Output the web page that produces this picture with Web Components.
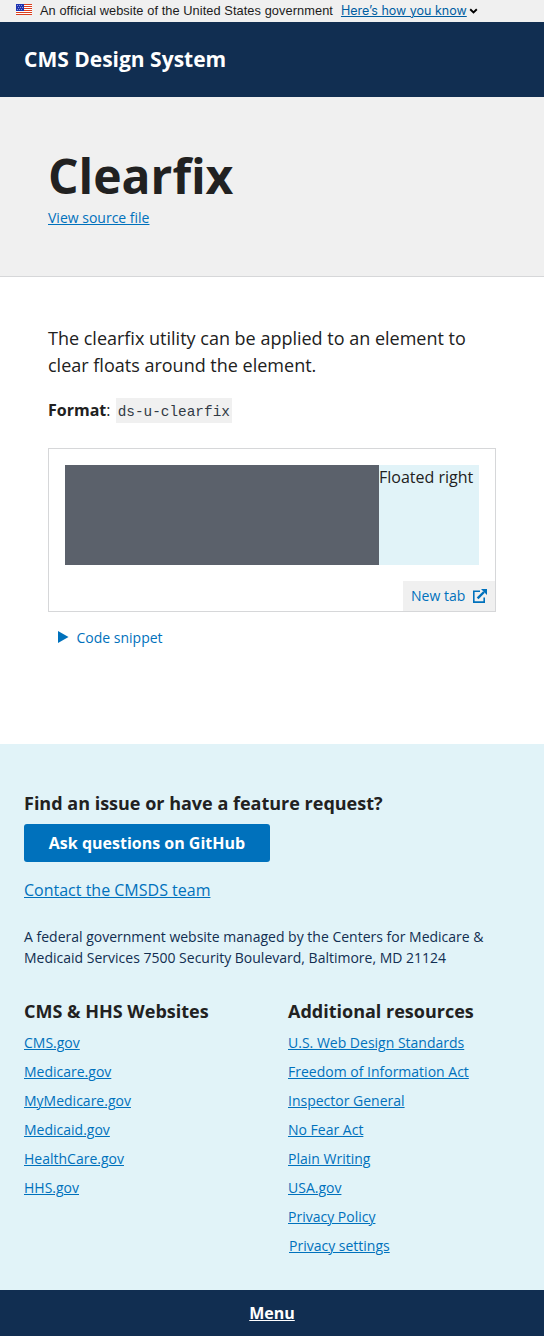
<!DOCTYPE html>
<html lang="en">
<head>
<meta charset="utf-8">
<title>Clearfix - CMS Design System</title>
<style>
html,body{margin:0;padding:0}
body{font:16px/24px "Open Sans",sans-serif;color:#212121;background:#fff}
</style>
</head>
<body>
<ds-page></ds-page>
<script>
const define = (name, html) => {
  const t = document.createElement('template');
  t.innerHTML = html;
  customElements.define(name, class extends HTMLElement {
    constructor() {
      super();
      this.attachShadow({mode: 'open'}).append(t.content.cloneNode(true));
    }
  });
};

define('ds-link', `<style>
:host{display:inline-block;font-size:14px;line-height:21px}
a{color:#0071bc;text-decoration:underline;text-decoration-thickness:1px;text-underline-offset:1px}
</style><a href="#"><slot></slot></a>`);

define('ds-flag', `<style>:host{display:block;width:16px;height:11px}svg{display:block}</style>
<svg width="16" height="11" viewBox="0 0 16 11" shape-rendering="crispEdges">
<path fill="#fff" d="M0 0h16v11H0z"/>
<path fill="#db3e1f" d="M8 0h8v1H8zM8 2h8v1H8zM8 4h8v1H8zM8 6h8v1H8zM0 8h16v1H0zM0 10h16v1H0z"/>
<path fill="#1e33b1" d="M0 0h8v7H0z"/>
<g fill="#fff" shape-rendering="auto"><circle cx="1.5" cy="1.5" r=".45"/><circle cx="3.5" cy="1.5" r=".45"/><circle cx="5.5" cy="1.5" r=".45"/><circle cx="2.5" cy="3.5" r=".45"/><circle cx="4.5" cy="3.5" r=".45"/><circle cx="6.5" cy="3.5" r=".45"/><circle cx="1.5" cy="5.5" r=".45"/><circle cx="3.5" cy="5.5" r=".45"/><circle cx="5.5" cy="5.5" r=".45"/></g>
</svg>`);

define('ds-usa-banner', `<style>
:host{display:flex;height:22px;box-sizing:border-box;padding:0 16px;background:#f0f0f0;font:12.8px/22px "Liberation Sans",sans-serif;color:#1b1b1b}
ds-flag{margin:4px 8px 0 0}
span{white-space:nowrap;letter-spacing:.072px}
a{margin-left:8px;color:#005ea2;font-family:Inter,sans-serif;font-size:12.5px;text-decoration:underline;text-decoration-thickness:1px;text-underline-offset:1px;white-space:nowrap}
svg{margin:8px 0 0 2px;display:block}
</style><ds-flag></ds-flag><span>An official website of the United States government</span><a href="#">Here’s how you know</a>
<svg width="9" height="6" viewBox="0 0 9 6"><path d="M1.2 1.3 4.5 4.4 7.8 1.3" fill="none" stroke="#000" stroke-width="1.9"/></svg>`);

define('ds-header', `<style>
:host{display:flex;align-items:center;height:75px;box-sizing:border-box;padding:0 24px 2px;background:#112e51;color:#fff;font-size:21px;font-weight:700;line-height:28px;white-space:nowrap}
</style><span><slot></slot></span>`);

define('ds-hero', `<style>
:host{display:block;height:180px;box-sizing:border-box;padding:48px 48px 0;background:#f0f0f0;border-bottom:1px solid #d6d7d9}
h1{margin:0;font-size:48px;line-height:62px;font-weight:700}
ds-link{display:block}
</style><h1><slot></slot></h1><ds-link>View source file</ds-link>`);

define('ds-example', `<style>
:host{display:block;height:164px;box-sizing:border-box;border:1px solid #d6d7d9}
.demo{display:flex;margin:16px 16px 16px;height:100px}
.dark{flex:1;background:#5b616b}
.right{width:100px;background:#e1f3f8;box-sizing:border-box;white-space:nowrap}
.foot{display:flex;justify-content:flex-end}
a{display:flex;align-items:center;height:30px;width:92px;box-sizing:border-box;padding:0 8px;justify-content:space-between;background:#f0f0f0;color:#0071bc;font-size:14px;text-decoration:none;white-space:nowrap}
</style><div class="demo"><div class="dark"></div><div class="right"><slot></slot></div></div>
<div class="foot"><a href="#"><span>New tab</span><svg width="14" height="14" viewBox="0 0 14 14"><g fill="none" stroke="#0071bc"><path d="M7 2.2H.8v10.9h10.4V8.6" stroke-width="1.6"/><path d="M4.6 9.4 11 3" stroke-width="2.4"/></g><path d="M8 0h6v6z" fill="#0071bc"/></svg></a></div>`);

define('ds-snippet', `<style>
:host{display:flex;align-items:center;gap:8px;height:21px;margin:15px 0 0 10px;color:#0071bc;font-size:14px;line-height:21px}
svg{display:block;margin-top:-2px}
</style><svg width="10.5" height="12" viewBox="0 0 10.5 12"><path d="M0 0 10.5 6 0 12z" fill="#0071bc"/></svg><span><slot></slot></span>`);

define('ds-main', `<style>
:host{display:block;height:467px;box-sizing:border-box;padding:48px 48px 0}
.lead{margin:0;font-size:18px;line-height:27px}
.format{margin:19px 0 0;height:24px;white-space:nowrap}
code{font:14.4px/24px "Liberation Mono",monospace;color:#323a45;background:#f0f0f0;padding:6px 2px 3px;margin-left:1px}
ds-example{margin-top:26px}
</style><p class="lead">The clearfix utility can be applied to an element to clear floats around the element.</p>
<p class="format"><b>Format</b>: <code>ds-u-clearfix</code></p>
<ds-example>Floated right</ds-example><ds-snippet>Code snippet</ds-snippet>`);

define('ds-button', `<style>
:host{display:flex;width:246px;height:38px}
a{flex:1;background:#0071bc;color:#fff;border-radius:3px;font-weight:700;line-height:38px;text-align:center;text-decoration:none;white-space:nowrap}
</style><a href="#"><slot></slot></a>`);

define('ds-link-list', `<style>
:host{display:flex;flex-direction:column;align-items:flex-start;gap:8px}
h2{margin:0 0 1px;font-size:18px;line-height:23px;font-weight:700;white-space:nowrap}
</style><h2><slot name="title"></slot></h2><slot></slot>`);

define('ds-footer', `<style>
:host{display:block;height:546px;box-sizing:border-box;padding:47px 24px 0;background:#e1f3f8}
h2{margin:0;font-size:18px;line-height:24px;font-weight:700}
ds-button{margin-top:9px}
.contact{display:block;font-size:16px;line-height:24px;margin-top:16px}
.address{margin:24px 0 0;font-size:14px;line-height:21px;color:#112e51}
.cols{display:grid;grid-template-columns:1fr 1fr;column-gap:32px;margin-top:32px}
.settings{margin-left:1px}
</style><h2>Find an issue or have a feature request?</h2>
<ds-button>Ask questions on GitHub</ds-button>
<ds-link class="contact">Contact the CMSDS team</ds-link>
<p class="address">A federal government website managed by the Centers for Medicare &amp; Medicaid Services 7500 Security Boulevard, Baltimore, MD 21124</p>
<div class="cols">
<ds-link-list><span slot="title">CMS &amp; HHS Websites</span><ds-link>CMS.gov</ds-link><ds-link>Medicare.gov</ds-link><ds-link>MyMedicare.gov</ds-link><ds-link>Medicaid.gov</ds-link><ds-link>HealthCare.gov</ds-link><ds-link>HHS.gov</ds-link></ds-link-list>
<ds-link-list><span slot="title">Additional resources</span><ds-link>U.S. Web Design Standards</ds-link><ds-link>Freedom of Information Act</ds-link><ds-link>Inspector General</ds-link><ds-link>No Fear Act</ds-link><ds-link>Plain Writing</ds-link><ds-link>USA.gov</ds-link><ds-link>Privacy Policy</ds-link><ds-link class="settings">Privacy settings</ds-link></ds-link-list>
</div>`);

define('ds-menu-bar', `<style>
:host{display:flex;align-items:center;justify-content:center;height:46px;background:#112e51}
a{color:#fff;font-weight:700;text-decoration:underline;text-decoration-thickness:1px;text-underline-offset:1px}
</style><a href="#"><slot></slot></a>`);

define('ds-page', `<style>:host{display:flex;flex-direction:column;width:544px}</style>
<ds-usa-banner></ds-usa-banner>
<ds-header>CMS Design System</ds-header>
<ds-hero>Clearfix</ds-hero>
<ds-main></ds-main>
<ds-footer></ds-footer>
<ds-menu-bar>Menu</ds-menu-bar>`);
</script>
</body>
</html>
